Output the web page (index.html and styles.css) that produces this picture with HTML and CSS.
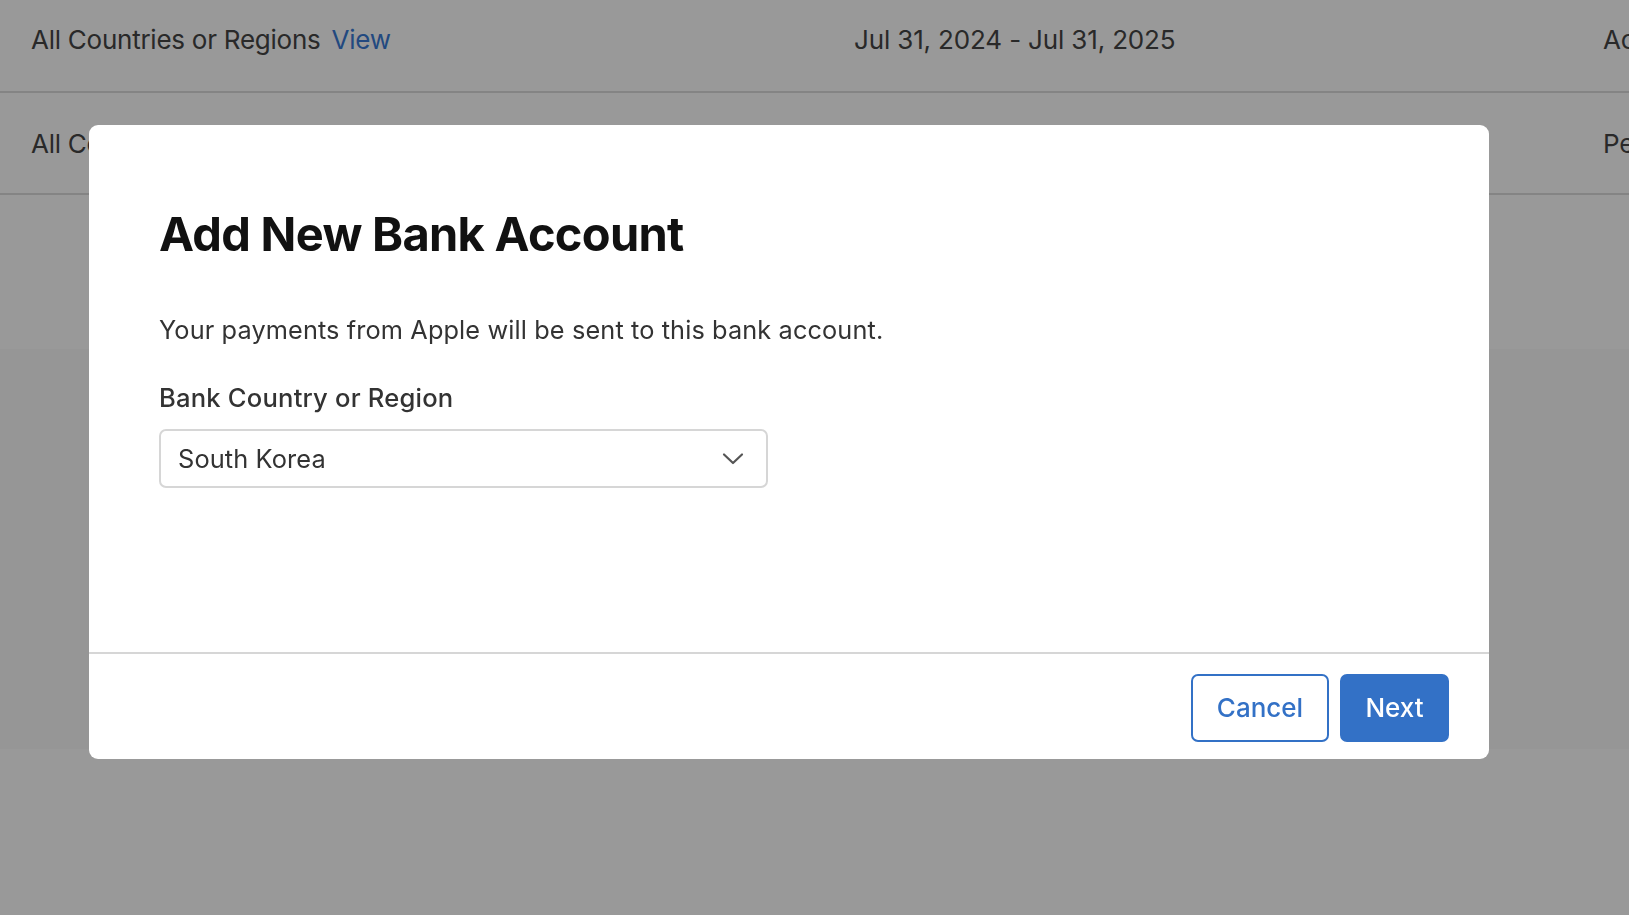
FILE: index.html
```html
<!DOCTYPE html>
<html lang="en">
<head>
<meta charset="utf-8">
<title>Add New Bank Account</title>
<link rel="stylesheet" href="styles.css">
</head>
<body>
<div class="page">
  <div class="row row-first">
    <div class="cell cell-region">All Countries or Regions <a class="link" href="#">View</a></div>
    <div class="cell cell-date">Jul 31, 2024 - Jul 31, 2025</div>
    <div class="cell cell-status">Active</div>
  </div>
  <div class="row">
    <div class="cell cell-region">All Countries or Regions</div>
    <div class="cell cell-date"></div>
    <div class="cell cell-status">Pending</div>
  </div>
  <div class="spacer"></div>
  <div class="panel"></div>
</div>

<div class="overlay"></div>

<div class="modal" role="dialog" aria-labelledby="modal-title">
  <div class="modal-body">
    <h1 id="modal-title" class="modal-title">Add New Bank Account</h1>
    <p class="modal-text">Your payments from Apple will be sent to this bank account.</p>
    <label class="field-label" for="country">Bank Country or Region</label>
    <div class="select" id="country">
      <span class="select-value">South Korea</span>
      <svg class="chevron" width="22" height="14" viewBox="0 0 22 14" aria-hidden="true">
        <path d="M2 2.5 L11 11 L20 2.5" fill="none" stroke="#555" stroke-width="2.2" stroke-linecap="round" stroke-linejoin="round"/>
      </svg>
    </div>
  </div>
  <div class="modal-footer">
    <button class="btn btn-secondary" type="button">Cancel</button>
    <button class="btn btn-primary" type="button">Next</button>
  </div>
</div>
</body>
</html>
```

FILE: styles.css
```css
* {
  box-sizing: border-box;
}

html, body {
  margin: 0;
  padding: 0;
  height: 100%;
  overflow: hidden;
}

body {
  background: #ffffff;
  font-family: Inter, "Noto Sans", "Liberation Sans", sans-serif;
  color: #1d1d1f;
}

.page {
  display: flex;
  flex-direction: column;
}

.row {
  display: flex;
  align-items: center;
  height: 102px;
  border-bottom: 2px solid #dcdcdc;
  font-size: 26px;
  color: #454545;
  letter-spacing: -0.15px;
  white-space: nowrap;
  overflow: hidden;
}

.row-first {
  height: 93px;
  align-items: flex-start;
  padding-top: 24px;
}

.cell {
  flex: none;
}

.cell-region {
  width: 854px;
  padding-left: 31px;
  letter-spacing: -0.25px;
}

.cell-date {
  width: 749px;
}

.link {
  color: #3a7bd5;
  text-decoration: none;
  margin-left: 4px;
}

.spacer {
  height: 154px;
}

.panel {
  height: 400px;
  background: #fafafa;
}

.overlay {
  position: fixed;
  inset: 0;
  background: rgba(0, 0, 0, 0.4);
}

.modal {
  position: absolute;
  left: 89px;
  top: 125px;
  width: 1400px;
  height: 634px;
  background: #ffffff;
  border-radius: 9px;
  display: flex;
  flex-direction: column;
  overflow: hidden;
}

.modal-body {
  flex: 1;
  padding: 80px 70px 0;
  display: flex;
  flex-direction: column;
  align-items: flex-start;
}

.modal-title {
  margin: 0;
  font-size: 47px;
  line-height: 58px;
  font-weight: 700;
  letter-spacing: -0.7px;
  color: #111111;
}

.modal-text {
  margin: 50px 0 0;
  font-size: 25.3px;
  line-height: 34px;
  color: #333333;
  letter-spacing: 0.12px;
}

.field-label {
  margin-top: 34px;
  font-size: 25.6px;
  line-height: 34px;
  font-weight: 500;
  color: #333333;
  letter-spacing: 0.2px;
}

.select {
  margin-top: 14px;
  width: 609px;
  height: 59px;
  border: 2px solid #d6d6d6;
  border-radius: 7px;
  display: flex;
  align-items: center;
  justify-content: space-between;
  padding: 0 22px 0 17px;
}

.select-value {
  font-size: 25.4px;
  color: #333333;
  letter-spacing: 0.1px;
}

.chevron {
  display: block;
}

.modal-footer {
  flex: none;
  height: 107px;
  border-top: 2px solid #d6d6d6;
  display: flex;
  justify-content: flex-end;
  align-items: center;
  gap: 11px;
  padding: 2px 40px 0;
}

.btn {
  height: 68px;
  border-radius: 7px;
  font-family: Inter, "Noto Sans", "Liberation Sans", sans-serif;
  font-size: 26px;
  font-weight: 500;
  padding: 0;
  cursor: pointer;
}

.btn-secondary {
  width: 138px;
  background: #ffffff;
  color: #3371c6;
  border: 2px solid #3371c6;
}

.btn-primary {
  width: 109px;
  background: #3371c6;
  color: #ffffff;
  border: 2px solid #3371c6;
}
```
